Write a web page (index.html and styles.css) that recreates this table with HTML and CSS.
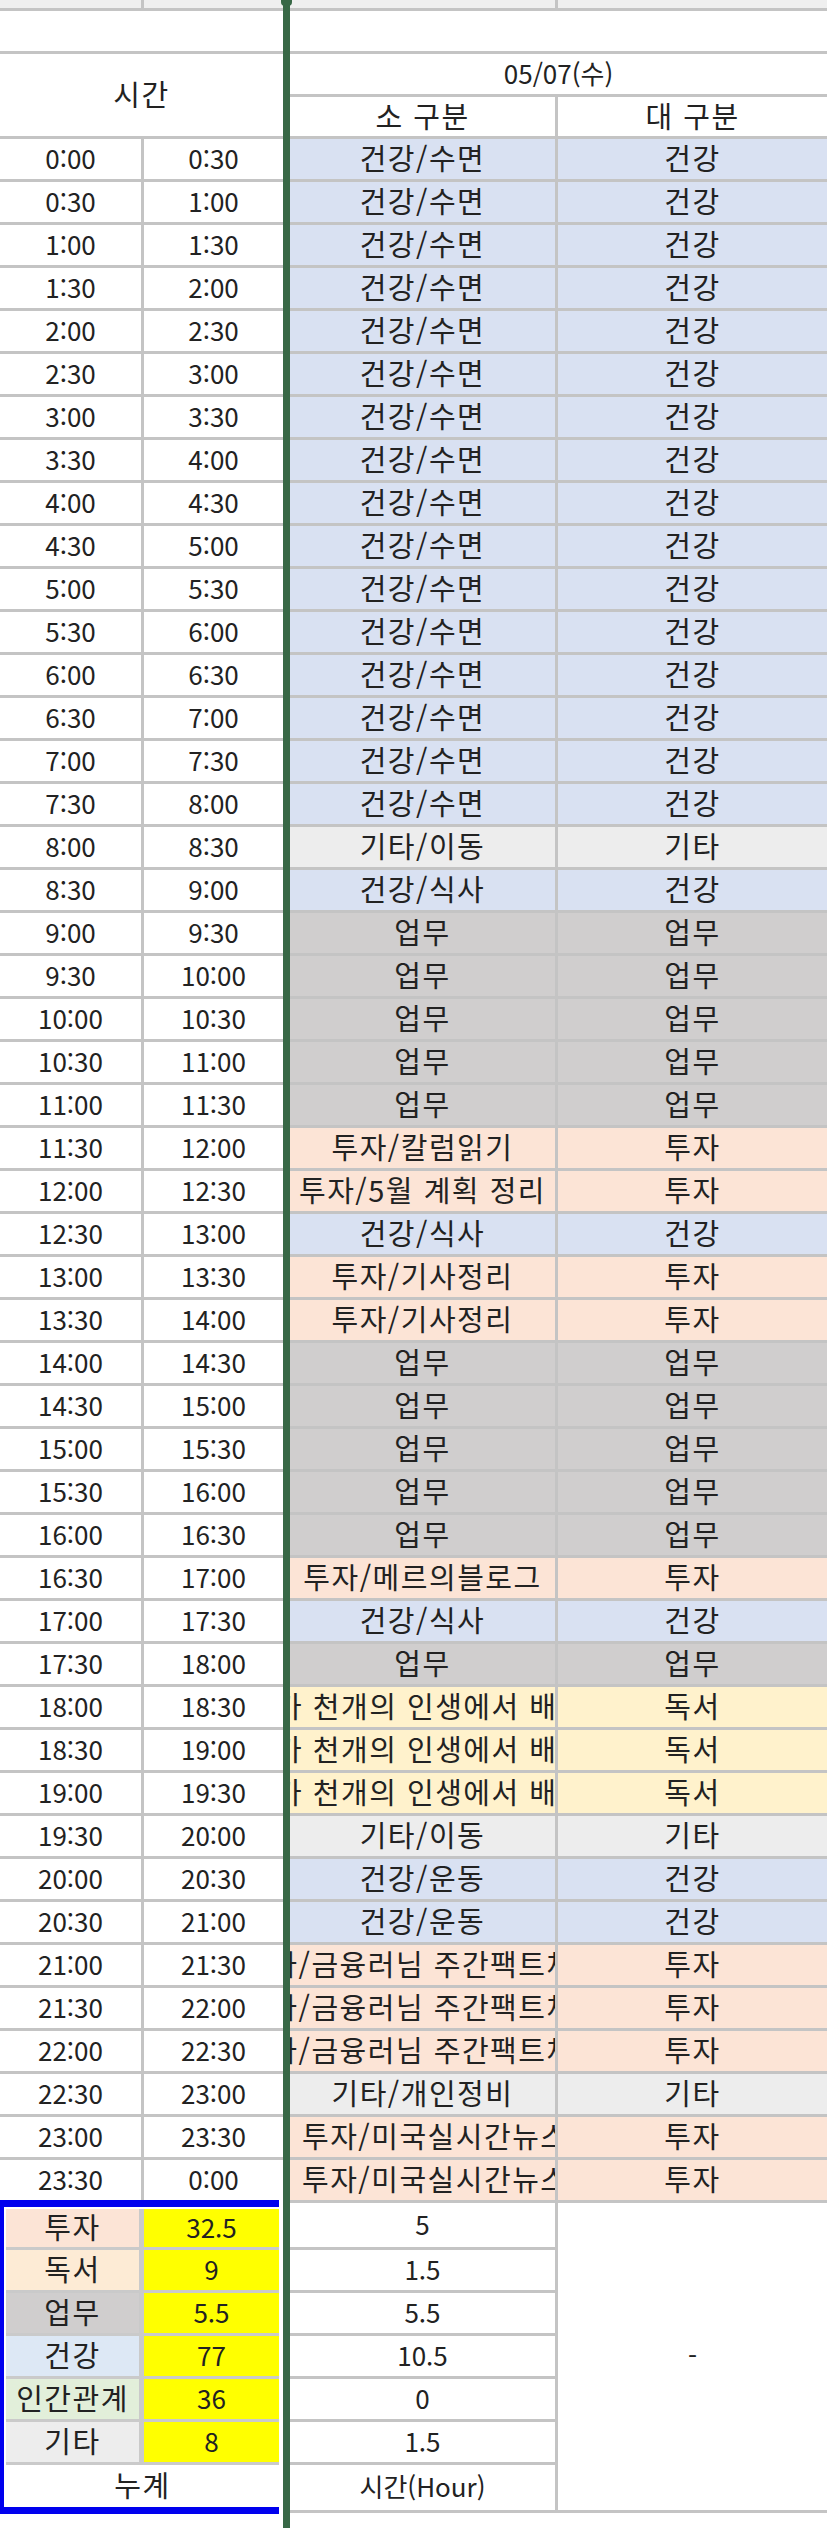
FILE: index.html
```html
<!DOCTYPE html>
<html lang="ko">
<head>
<meta charset="utf-8">
<title>05/07 시간 기록</title>
<link rel="stylesheet" href="styles.css">
</head>
<body>
<div class="sheet">
  <div class="pane-left">
    <div class="grid lgrid">
      <div class="strip"></div><div class="strip"></div>
      <div class="c span2"></div>
      <div class="c span2 head">시간</div>
      <div class="c num">0:00</div><div class="c num">0:30</div>
      <div class="c num">0:30</div><div class="c num">1:00</div>
      <div class="c num">1:00</div><div class="c num">1:30</div>
      <div class="c num">1:30</div><div class="c num">2:00</div>
      <div class="c num">2:00</div><div class="c num">2:30</div>
      <div class="c num">2:30</div><div class="c num">3:00</div>
      <div class="c num">3:00</div><div class="c num">3:30</div>
      <div class="c num">3:30</div><div class="c num">4:00</div>
      <div class="c num">4:00</div><div class="c num">4:30</div>
      <div class="c num">4:30</div><div class="c num">5:00</div>
      <div class="c num">5:00</div><div class="c num">5:30</div>
      <div class="c num">5:30</div><div class="c num">6:00</div>
      <div class="c num">6:00</div><div class="c num">6:30</div>
      <div class="c num">6:30</div><div class="c num">7:00</div>
      <div class="c num">7:00</div><div class="c num">7:30</div>
      <div class="c num">7:30</div><div class="c num">8:00</div>
      <div class="c num">8:00</div><div class="c num">8:30</div>
      <div class="c num">8:30</div><div class="c num">9:00</div>
      <div class="c num">9:00</div><div class="c num">9:30</div>
      <div class="c num">9:30</div><div class="c num">10:00</div>
      <div class="c num">10:00</div><div class="c num">10:30</div>
      <div class="c num">10:30</div><div class="c num">11:00</div>
      <div class="c num">11:00</div><div class="c num">11:30</div>
      <div class="c num">11:30</div><div class="c num">12:00</div>
      <div class="c num">12:00</div><div class="c num">12:30</div>
      <div class="c num">12:30</div><div class="c num">13:00</div>
      <div class="c num">13:00</div><div class="c num">13:30</div>
      <div class="c num">13:30</div><div class="c num">14:00</div>
      <div class="c num">14:00</div><div class="c num">14:30</div>
      <div class="c num">14:30</div><div class="c num">15:00</div>
      <div class="c num">15:00</div><div class="c num">15:30</div>
      <div class="c num">15:30</div><div class="c num">16:00</div>
      <div class="c num">16:00</div><div class="c num">16:30</div>
      <div class="c num">16:30</div><div class="c num">17:00</div>
      <div class="c num">17:00</div><div class="c num">17:30</div>
      <div class="c num">17:30</div><div class="c num">18:00</div>
      <div class="c num">18:00</div><div class="c num">18:30</div>
      <div class="c num">18:30</div><div class="c num">19:00</div>
      <div class="c num">19:00</div><div class="c num">19:30</div>
      <div class="c num">19:30</div><div class="c num">20:00</div>
      <div class="c num">20:00</div><div class="c num">20:30</div>
      <div class="c num">20:30</div><div class="c num">21:00</div>
      <div class="c num">21:00</div><div class="c num">21:30</div>
      <div class="c num">21:30</div><div class="c num">22:00</div>
      <div class="c num">22:00</div><div class="c num">22:30</div>
      <div class="c num">22:30</div><div class="c num">23:00</div>
      <div class="c num">23:00</div><div class="c num">23:30</div>
      <div class="c num">23:30</div><div class="c num">0:00</div>
    </div>
    <div class="total">
      <div class="tgrid">
        <div class="c iv">투자</div><div class="c num yel">32.5</div>
        <div class="c rdl">독서</div><div class="c num yel">9</div>
        <div class="c wk">업무</div><div class="c num yel">5.5</div>
        <div class="c hll">건강</div><div class="c num yel">77</div>
        <div class="c rel">인간관계</div><div class="c num yel">36</div>
        <div class="c etc">기타</div><div class="c num yel">8</div>
        <div class="c span2">누계</div>
      </div>
    </div>
  </div>
  <div class="divider"></div>
  <div class="pane-right">
    <div class="grid rgrid">
      <div class="strip"></div><div class="strip"></div>
      <div class="c span2"></div>
      <div class="c span2 num">05/07(수)</div>
      <div class="c">소 구분</div><div class="c">대 구분</div>

      <div class="c hl">건강/수면</div><div class="c hl">건강</div>
      <div class="c hl">건강/수면</div><div class="c hl">건강</div>
      <div class="c hl">건강/수면</div><div class="c hl">건강</div>
      <div class="c hl">건강/수면</div><div class="c hl">건강</div>
      <div class="c hl">건강/수면</div><div class="c hl">건강</div>
      <div class="c hl">건강/수면</div><div class="c hl">건강</div>
      <div class="c hl">건강/수면</div><div class="c hl">건강</div>
      <div class="c hl">건강/수면</div><div class="c hl">건강</div>
      <div class="c hl">건강/수면</div><div class="c hl">건강</div>
      <div class="c hl">건강/수면</div><div class="c hl">건강</div>
      <div class="c hl">건강/수면</div><div class="c hl">건강</div>
      <div class="c hl">건강/수면</div><div class="c hl">건강</div>
      <div class="c hl">건강/수면</div><div class="c hl">건강</div>
      <div class="c hl">건강/수면</div><div class="c hl">건강</div>
      <div class="c hl">건강/수면</div><div class="c hl">건강</div>
      <div class="c hl">건강/수면</div><div class="c hl">건강</div>
      <div class="c etc">기타/이동</div><div class="c etc">기타</div>
      <div class="c hl">건강/식사</div><div class="c hl">건강</div>
      <div class="c wk">업무</div><div class="c wk">업무</div>
      <div class="c wk">업무</div><div class="c wk">업무</div>
      <div class="c wk">업무</div><div class="c wk">업무</div>
      <div class="c wk">업무</div><div class="c wk">업무</div>
      <div class="c wk">업무</div><div class="c wk">업무</div>
      <div class="c iv">투자/칼럼읽기</div><div class="c iv">투자</div>
      <div class="c iv">투자/5월 계획 정리</div><div class="c iv">투자</div>
      <div class="c hl">건강/식사</div><div class="c hl">건강</div>
      <div class="c iv">투자/기사정리</div><div class="c iv">투자</div>
      <div class="c iv">투자/기사정리</div><div class="c iv">투자</div>
      <div class="c wk">업무</div><div class="c wk">업무</div>
      <div class="c wk">업무</div><div class="c wk">업무</div>
      <div class="c wk">업무</div><div class="c wk">업무</div>
      <div class="c wk">업무</div><div class="c wk">업무</div>
      <div class="c wk">업무</div><div class="c wk">업무</div>
      <div class="c iv">투자/메르의블로그</div><div class="c iv">투자</div>
      <div class="c hl">건강/식사</div><div class="c hl">건강</div>
      <div class="c wk">업무</div><div class="c wk">업무</div>
      <div class="c rd clip book"><span class="book-t">가 천개의 인생에서 배운 것</span></div><div class="c rd">독서</div>
      <div class="c rd clip book"><span class="book-t">가 천개의 인생에서 배운 것</span></div><div class="c rd">독서</div>
      <div class="c rd clip book"><span class="book-t">가 천개의 인생에서 배운 것</span></div><div class="c rd">독서</div>
      <div class="c etc">기타/이동</div><div class="c etc">기타</div>
      <div class="c hl">건강/운동</div><div class="c hl">건강</div>
      <div class="c hl">건강/운동</div><div class="c hl">건강</div>
      <div class="c iv clip">투자/금융러님 주간팩트체크</div><div class="c iv">투자</div>
      <div class="c iv clip">투자/금융러님 주간팩트체크</div><div class="c iv">투자</div>
      <div class="c iv clip">투자/금융러님 주간팩트체크</div><div class="c iv">투자</div>
      <div class="c etc">기타/개인정비</div><div class="c etc">기타</div>
      <div class="c iv clip lead">투자/미국실시간뉴스 듣기</div><div class="c iv">투자</div>
      <div class="c iv clip lead">투자/미국실시간뉴스 듣기</div><div class="c iv">투자</div>

      <div class="c num sc">5</div>
      <div class="c num dash">-</div>
      <div class="c num sc">1.5</div>
      <div class="c num sc">5.5</div>
      <div class="c num sc">10.5</div>
      <div class="c num sc">0</div>
      <div class="c num sc">1.5</div>
      <div class="c num sc">시간(Hour)</div>
    </div>
  </div>
</div>
</body>
</html>
```
FILE: styles.css
```css
* {
  box-sizing: border-box;
}

html,
body {
  margin: 0;
  padding: 0;
  background: #ffffff;
}

body {
  font-family: "Noto Sans CJK KR", "Noto Sans", sans-serif;
  color: #222222;
}

.sheet {
  display: flex;
  width: 827px;
  min-height: 2528px;
}

.pane-left {
  width: 283px;
  flex: none;
}

.pane-right {
  flex: 1;
}

.divider {
  width: 7px;
  flex: none;
  background: #386846;
  position: relative;
}

.divider::before {
  content: "";
  position: absolute;
  top: 0;
  left: -2px;
  width: 11px;
  height: 6px;
  border-radius: 0 0 4px 4px;
  background: #386846;
}

.grid {
  display: grid;
  gap: 3px;
  background: #c4c4c4;
}

.lgrid {
  grid-template-columns: 141px 139px;
  grid-template-rows: 8px 40px 40px 39px repeat(48, 40px);
}

.rgrid {
  grid-template-columns: 265px 269px;
  grid-template-rows: 8px 40px 40px 39px repeat(48, 40px) 44px repeat(5, 40px) 45px;
  border-bottom: 3px solid #c4c4c4;
}

.strip {
  background: #efefef;
}

.c {
  background: #ffffff;
  display: flex;
  align-items: center;
  justify-content: center;
  white-space: nowrap;
  font-size: 29px;
  line-height: 1;
  letter-spacing: 1.5px;
  padding-bottom: 3px;
}

.c.num {
  font-size: 26px;
  letter-spacing: 0;
}

.clip {
  overflow: hidden;
}

.book {
  justify-content: flex-start;
}

.book-t {
  margin-left: -15px;
}

.lead {
  justify-content: flex-start;
  padding-left: 12px;
}

.span2 {
  grid-column: span 2;
}

.head {
  grid-row: span 2;
}

.sc {
  grid-column: 1;
}

.dash {
  grid-column: 2;
  grid-row: 53 / span 7;
}

/* category fills */
.hl {
  background: #d9e1f2;
}

.hll {
  background: #dde8f5;
}

.wk {
  background: #d0cece;
}

.iv {
  background: #fce4d6;
}

.rd {
  background: #fff2cc;
}

.rdl {
  background: #fdebd5;
}

.etc {
  background: #ededed;
}

.rel {
  background: #e2efda;
}

.yel {
  background: #ffff00;
}

/* weekly total box */
.total {
  width: 279px;
  border-style: solid;
  border-color: #0000ee;
  border-width: 7px 0 7px 4px;
  background: #ffffff;
  padding: 2px 0 0 2px;
}

.tgrid {
  display: grid;
  grid-template-columns: 133px 135px;
  grid-template-rows: 38px 40px 40px 40px 40px 40px 42px;
  column-gap: 5px;
  row-gap: 3px;
  background: #cacaca;
}
```
